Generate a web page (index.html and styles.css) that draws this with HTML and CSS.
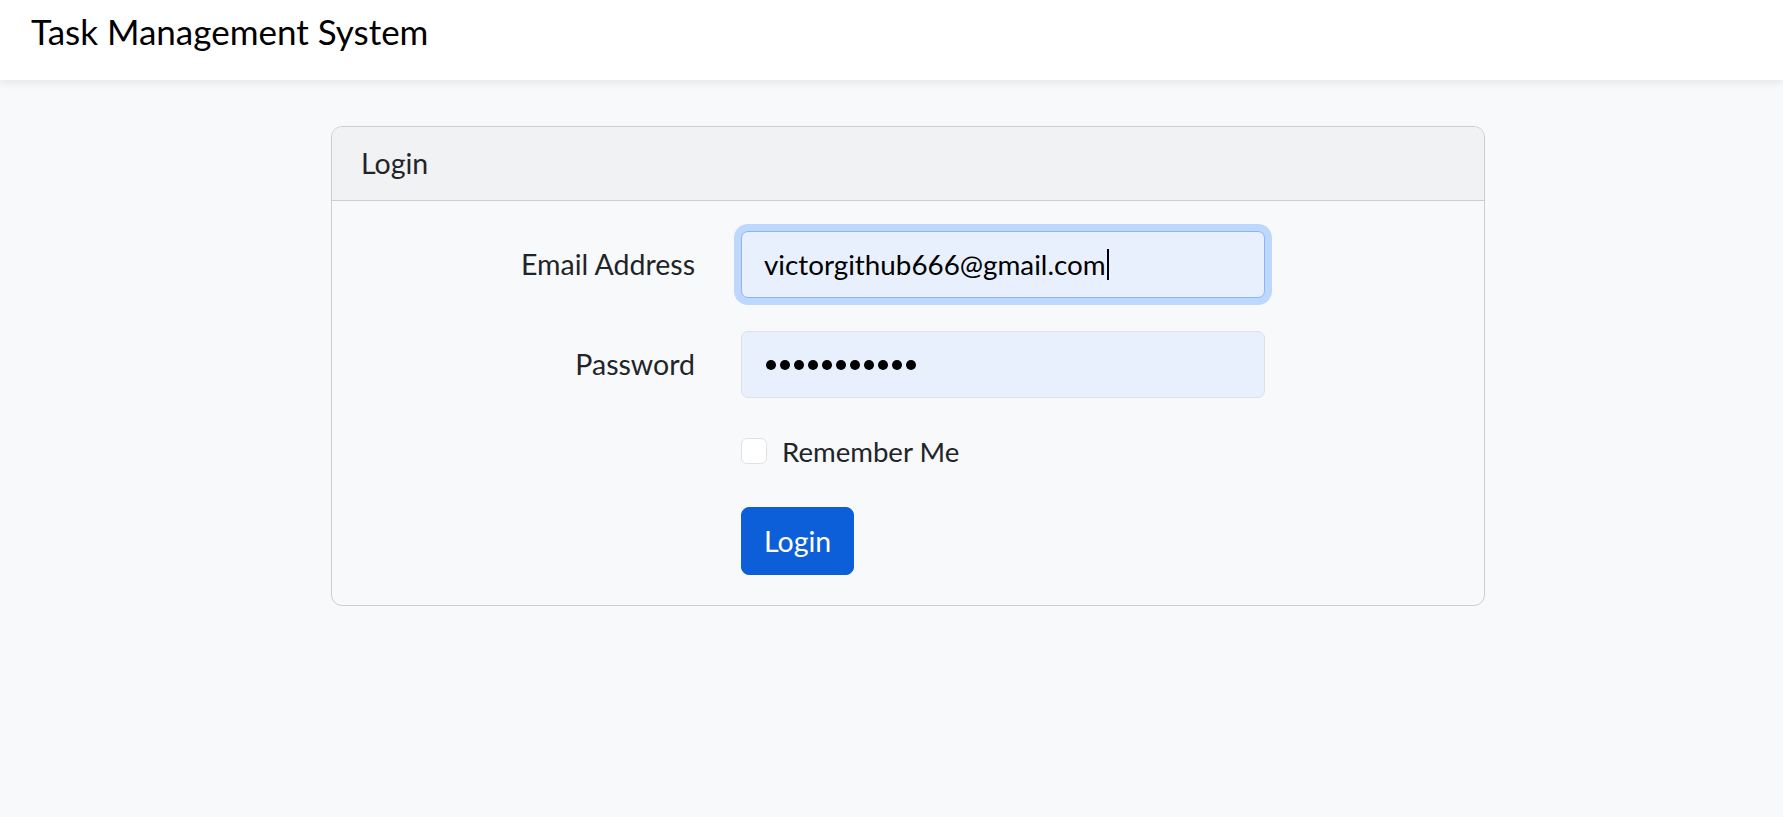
FILE: index.html
```html
<!DOCTYPE html>
<html lang="en">
<head>
<meta charset="utf-8">
<title>Task Management System</title>
<link rel="stylesheet" href="styles.css">
</head>
<body>
<header class="navbar">
  <a class="brand" href="#">Task Management System</a>
</header>
<main class="page">
  <section class="card">
    <div class="card-header">Login</div>
    <form class="card-body form-grid">
      <label class="col-label" for="email">Email Address</label>
      <div class="control is-focused" id="email" role="textbox" aria-label="Email Address"><span class="value">victorgithub666@gmail.com</span><span class="caret"></span></div>

      <label class="col-label" for="password">Password</label>
      <div class="control" id="password" role="textbox" aria-label="Password">
        <span class="dots"><i></i><i></i><i></i><i></i><i></i><i></i><i></i><i></i><i></i><i></i><i></i></span>
      </div>

      <div class="check-row">
        <span class="checkbox"></span>
        <span class="check-label">Remember Me</span>
      </div>

      <div class="button-row">
        <button type="button" class="btn">Login</button>
      </div>
    </form>
  </section>
</main>
</body>
</html>
```

FILE: styles.css
```css
* {
  box-sizing: border-box;
}

html, body {
  margin: 0;
  padding: 0;
}

body {
  background: #f8f9fa;
  color: #212529;
  font-family: "Lato", "Noto Sans", sans-serif;
  font-size: 28.5px;
  min-height: 817px;
}

.navbar {
  height: 80px;
  background: #ffffff;
  box-shadow: 0 3px 8px rgba(0, 0, 0, 0.08);
  display: flex;
  align-items: flex-start;
  padding: 9px 0 0 31px;
  position: relative;
}

.brand {
  color: #000;
  text-decoration: none;
  font-size: 35px;
  line-height: 44px;
}

.page {
  padding: 46px 0 0 331px;
}

.card {
  width: 1154px;
  border: 1px solid #cdcecf;
  border-radius: 11px;
  background: #f8f9fa;
  overflow: hidden;
}

.card-header {
  height: 74px;
  background: #f1f2f3;
  border-bottom: 1px solid #cdcecf;
  padding: 0 29px;
  display: flex;
  align-items: center;
  line-height: 1;
}

.card-body {
  padding: 30px 29px 33px;
}

.form-grid {
  display: grid;
  grid-template-columns: 334px 524px;
  grid-template-rows: 67px 67px 40px 68px;
  column-gap: 46px;
  row-gap: 33px;
}

.col-label {
  display: flex;
  align-items: center;
  justify-content: flex-end;
  padding-bottom: 2px;
}

.control {
  height: 67px;
  border: 1px solid #dde1e6;
  border-radius: 7px;
  background: #e8f0fe;
  color: #000;
  display: flex;
  align-items: center;
  padding: 0 22px;
}

.control.is-focused {
  border-color: #86b7fe;
  box-shadow: 0 0 0 7px #bed7fd;
}

.value {
  white-space: nowrap;
  font-size: 27.8px;
}

.caret {
  display: inline-block;
  width: 2px;
  height: 31px;
  background: #000;
  margin-left: 1px;
}

.dots {
  display: flex;
  gap: 4px;
  padding-left: 2px;
}

.dots i {
  width: 10px;
  height: 10px;
  border-radius: 50%;
  background: #000;
}

.check-row {
  grid-column: 2;
  display: flex;
  align-items: center;
  gap: 15px;
}

.check-label {
  font-size: 27.6px;
}

.checkbox {
  width: 26px;
  height: 26px;
  border: 1px solid #dee2e6;
  border-radius: 6px;
  background: #fff;
}

.button-row {
  grid-column: 2;
  padding-top: 3px;
  margin-top: 3px;
}

.btn {
  height: 68px;
  padding: 0 22px;
  border: 1px solid #0c5fd8;
  border-radius: 8px;
  background: #0c5fd8;
  color: #fff;
  font-family: inherit;
  font-size: 28.5px;
  line-height: 1;
  margin-top: -3px;
}
```
